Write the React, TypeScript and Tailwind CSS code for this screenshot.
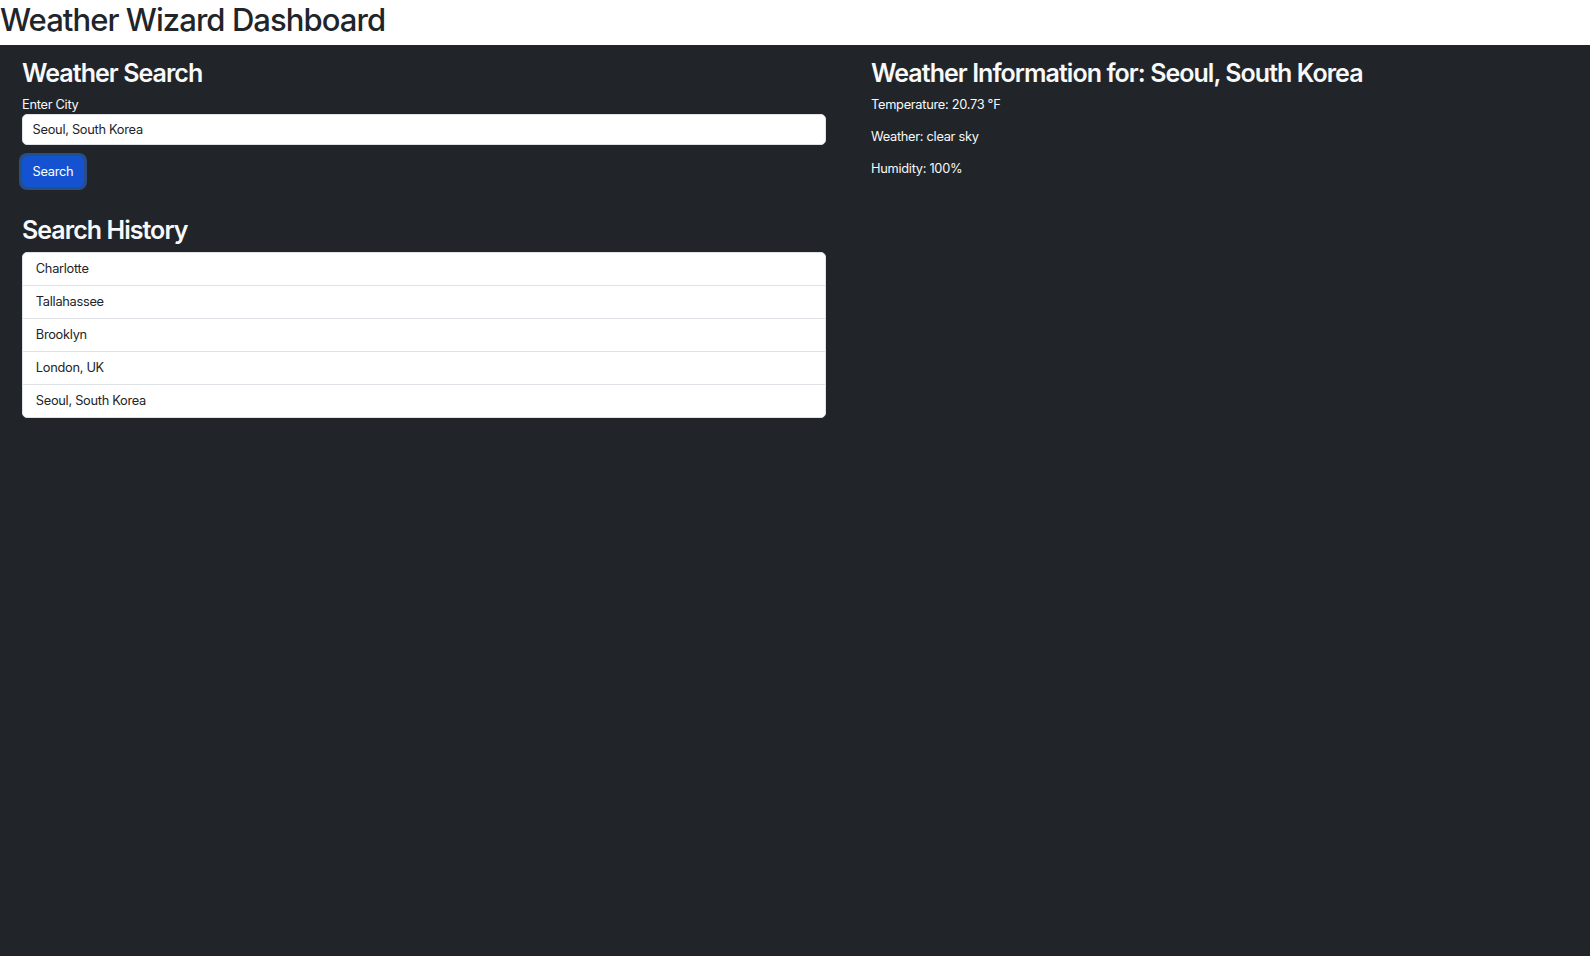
import React from "react";

const history = ["Charlotte", "Tallahassee", "Brooklyn", "London, UK", "Seoul, South Korea"];

export default function App() {
  return (
    <div className="h-screen flex flex-col bg-white font-['Inter','Noto_Sans',sans-serif] text-[12.8px] leading-[1.5] tracking-[-0.28px]">
      <h1 className="text-[31px] leading-[38.4px] font-medium text-[#212529] mb-[6.4px] tracking-[-0.94px] pt-[1px] h-[38.4px]">
        Weather Wizard Dashboard
      </h1>
      <div className="flex-1 bg-[#212529] text-[#f8f9fa] flex px-[22px] pt-[13px]">
        <div className="w-[804px] shrink-0">
          <h2 className="text-[25px] leading-[30.72px] font-semibold mb-[6.4px] tracking-[-0.96px]">Weather Search</h2>
          <label className="block">Enter City</label>
          <input
            readOnly
            value="Seoul, South Korea"
            className="block w-full h-[31px] px-[9.6px] bg-white text-[#212529] border border-[#dee2e6] rounded-[5px] outline-none tracking-[-0.28px]"
          />
          <button className="mt-[11px] h-[31px] px-[9.6px] rounded-[5px] bg-[#1452d1] border border-[#0a58ca] text-white ring-[3px] ring-[#2a4c87] tracking-[-0.28px]">
            Search
          </button>
          <h2 className="mt-[28px] text-[25px] leading-[30.72px] font-semibold mb-[6px] tracking-[-0.96px]">Search History</h2>
          <ul className="bg-white text-[#212529] rounded-[5px] border border-[#dee2e6] overflow-hidden">
            {history.map((h, i) => (
              <li
                key={h}
                className={`px-[12.8px] py-[6.4px] leading-[19.2px] ${i > 0 ? "border-t border-[#dee2e6]" : ""}`}
              >
                {h}
              </li>
            ))}
          </ul>
        </div>
        <div className="ml-[45px] flex-1">
          <h2 className="text-[25px] leading-[30.72px] font-semibold mb-[6.4px] tracking-[-0.96px]">
            Weather Information for: Seoul, South Korea
          </h2>
          <p className="mb-[12.8px]">Temperature: 20.73 °F</p>
          <p className="mb-[12.8px]">Weather: clear sky</p>
          <p className="mb-[12.8px]">Humidity: 100%</p>
        </div>
      </div>
    </div>
  );
}
